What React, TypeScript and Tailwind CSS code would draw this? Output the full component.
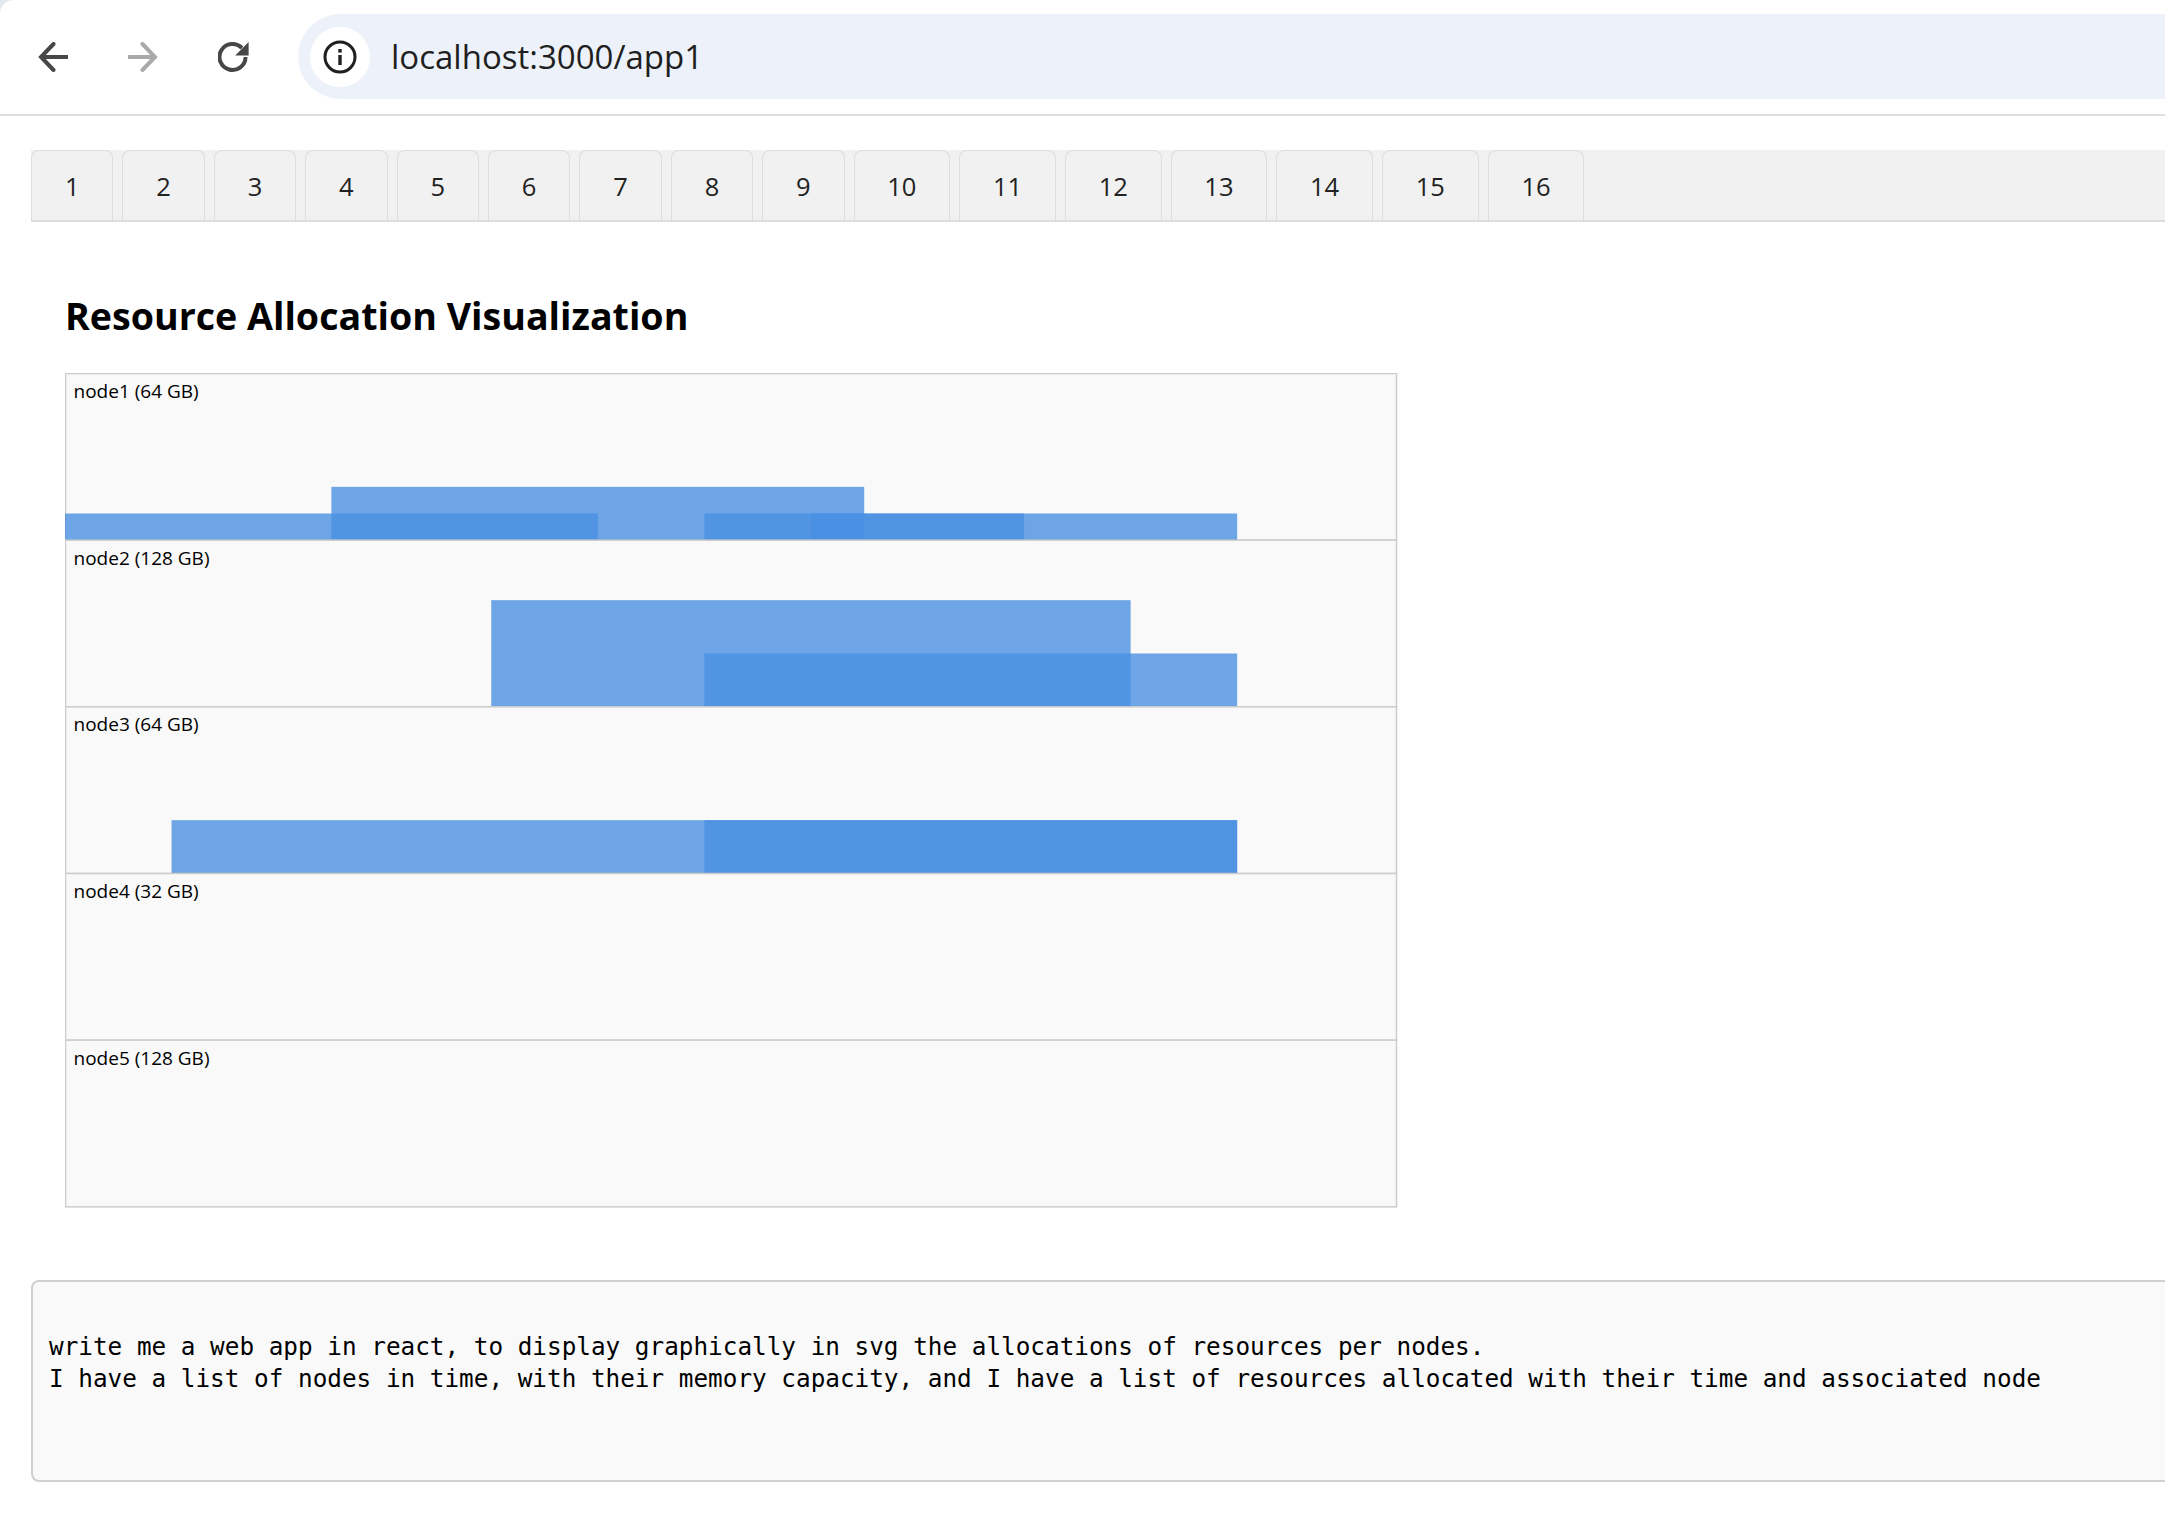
const tabs = Array.from({ length: 16 }, (_, index) => index + 1);

const unit = 1332 / 25;
const rowHeight = 166.67;

// start and end are in chart units, size is the bar height in px
const nodes = [
  {
    label: 'node1 (64 GB)',
    bars: [
      { start: 0, end: 10, size: 26.67 },
      { start: 5, end: 15, size: 53.33 },
      { start: 12, end: 22, size: 26.67 },
      { start: 14, end: 18, size: 26.67 },
    ],
  },
  {
    label: 'node2 (128 GB)',
    bars: [
      { start: 8, end: 20, size: 106.67 },
      { start: 12, end: 22, size: 53.33 },
    ],
  },
  {
    label: 'node3 (64 GB)',
    bars: [
      { start: 2, end: 22, size: 53.33 },
      { start: 12, end: 22, size: 53.33 },
    ],
  },
  { label: 'node4 (32 GB)', bars: [] },
  { label: 'node5 (128 GB)', bars: [] },
];

function BackIcon() {
  return (
    <svg width="30" height="30" viewBox="0 0 30 30" fill="none" className="shrink-0">
      <path d="M30 15H4" stroke="#474747" strokeWidth="4" />
      <path d="M15.5 2 3 15l12.5 13" stroke="#474747" strokeWidth="4" strokeLinecap="round" />
    </svg>
  );
}

function ForwardIcon() {
  return (
    <svg width="30" height="30" viewBox="0 0 30 30" fill="none" className="shrink-0">
      <path d="M0 15h26" stroke="#aaaaaa" strokeWidth="4" />
      <path d="M14.5 2 27 15 14.5 28" stroke="#aaaaaa" strokeWidth="4" strokeLinecap="round" />
    </svg>
  );
}

function ReloadIcon() {
  return (
    <svg width="32" height="32" viewBox="0 0 32 32" fill="none" className="shrink-0">
      <path d="M27.5 16a13 13 0 1 1-3.6-9" stroke="#474747" strokeWidth="4" />
      <path d="M30.6 1v13.4H17.2z" fill="#474747" />
    </svg>
  );
}

function InfoIcon() {
  return (
    <svg width="34" height="34" viewBox="0 0 34 34" fill="none">
      <circle cx="17" cy="17" r="15" stroke="#1f1f1f" strokeWidth="3" />
      <rect x="15.3" y="15" width="3.4" height="10" fill="#1f1f1f" />
      <rect x="15.3" y="9" width="3.4" height="3.6" fill="#1f1f1f" />
    </svg>
  );
}

function Chart() {
  return (
    <svg width="1333" height="835" viewBox="0 0 1333 835" className="block">
      {nodes.map((node, rowIndex) => {
        const top = rowIndex * rowHeight + 0.5;
        const bottom = top + rowHeight;
        return (
          <g key={node.label}>
            <rect x="0.5" y={top} width="1331" height={rowHeight} fill="#f9f9f9" stroke="#cccccc" strokeWidth="1.5" />
            {node.bars.map((bar) => (
              <rect
                key={`${bar.start}-${bar.end}`}
                x={bar.start * unit}
                y={bottom - bar.size}
                width={(bar.end - bar.start) * unit}
                height={bar.size}
                fill="#4a90e2"
                fillOpacity="0.8"
              />
            ))}
            <text x="8.5" y={top + 24.5} fontSize="19" fill="#000000" fontFamily="'Open Sans', sans-serif">
              {node.label}
            </text>
          </g>
        );
      })}
    </svg>
  );
}

export default function App() {
  return (
    <div className="h-[1522px] overflow-hidden bg-[#e3e8ef] font-['Open_Sans',sans-serif]">
      <div className="h-full rounded-tl-[14px] bg-white">
        <header className="flex h-[116px] items-center border-b-2 border-[#e0e0e0] pl-[38px] pb-[1px]">
          <BackIcon />
          <div className="ml-[60px]">
            <ForwardIcon />
          </div>
          <div className="ml-[60px]">
            <ReloadIcon />
          </div>
          <div className="ml-[48px] flex h-[85px] flex-1 items-center rounded-l-[43px] bg-[#edf2fa] pl-[12px]">
            <div className="flex h-[60px] w-[60px] items-center justify-center rounded-full bg-white">
              <InfoIcon />
            </div>
            <span className="ml-[21px] text-[33px] text-[#1f1f1f]">localhost:3000/app1</span>
          </div>
        </header>

        <nav className="mt-[34px] ml-[31px] flex h-[72px] gap-[9px] border-b-2 border-[#dddddd] bg-[#f1f1f1]">
          {tabs.map((tab) => (
            <div
              key={tab}
              className={`flex items-center justify-center rounded-t-[8px] border-x border-t border-[#dddddd] pt-[2px] text-[25.5px] text-[#222222] ${tab < 10 ? 'w-[82.4px]' : 'w-[96.7px]'}`}
            >
              {tab}
            </div>
          ))}
        </nav>

        <main className="pl-[65px]">
          <h1 className="mt-[66.5px] mb-[30.5px] text-[37.6px] leading-[54px] font-bold text-black">Resource Allocation Visualization</h1>
          <Chart />
        </main>

        <pre className="mt-[71.5px] ml-[31px] h-[202px] rounded-l-[8px] border-y-2 border-l-2 border-[#d0d0d0] bg-[#f9f9f9] pt-[49px] pl-[16px] font-['DejaVu_Sans_Mono',monospace] text-[24.33px] leading-[32px] text-black">
          {`write me a web app in react, to display graphically in svg the allocations of resources per nodes.
I have a list of nodes in time, with their memory capacity, and I have a list of resources allocated with their time and associated node`}
        </pre>
      </div>
    </div>
  );
}
